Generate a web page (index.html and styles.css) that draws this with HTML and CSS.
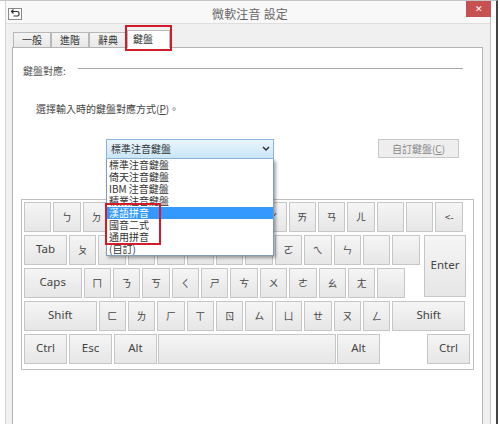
FILE: index.html
```html
<!DOCTYPE html>
<html lang="zh-Hant">
<head>
<meta charset="utf-8">
<title>微軟注音 設定</title>
<link rel="stylesheet" href="styles.css">
</head>
<body>
<div class="page">
  <div class="window">
    <header class="titlebar">
      <svg class="back-icon" width="14" height="12" viewBox="0 0 14 12"><rect x="0.5" y="0.5" width="13" height="11" fill="#fff" stroke="#8a8a8a"/><path d="M4 3.5h5.5a1.5 1.5 0 0 1 1.5 1.5v1.500a1.500 1.500 0 0 1-1.500 1.500h-4M5.500 1.500l-2 2 2 2" fill="none" stroke="#333" stroke-width="1.200"/></svg>
      <span class="title">微軟注音 設定</span>
      <span class="close">✕</span>
    </header>
    <nav class="tabs">
      <span class="tab">一般</span>
      <span class="tab">進階</span>
      <span class="tab">辭典</span>
      <span class="tab tab-active">鍵盤<i class="red-box red-tab"></i></span>
    </nav>
    <main class="pane">
      <div class="group-head"><span>鍵盤對應:</span><span class="rule"></span></div>
      <p class="prompt">選擇輸入時的鍵盤對應方式(<u>P</u>)。</p>
      <div class="combo-row">
        <div class="combo">
          <span>標準注音鍵盤</span>
          <svg width="8" height="6" viewBox="0 0 8 6"><path d="M1 1l3 3 3-3" fill="none" stroke="#333" stroke-width="1.500"/></svg>
          <ul class="list">
            <li>標準注音鍵盤</li>
            <li>倚天注音鍵盤</li>
            <li>IBM 注音鍵盤</li>
            <li>精業注音鍵盤</li>
            <li class="selected">漢語拼音</li>
            <li>國音二式</li>
            <li>通用拼音</li>
            <li>(自訂)</li>
            <i class="red-box red-list"></i>
          </ul>
        </div>
        <button class="custom" disabled>自訂鍵盤(<u>C</u>)</button>
      </div>
      <section class="keyboard">
        <div class="row">
          <span class="key"></span><span class="key">ㄅ</span><span class="key">ㄉ</span><span class="key">ˇ</span><span class="key">ˋ</span><span class="key">ㄓ</span><span class="key">ˊ</span><span class="key">˙</span><span class="key">ㄚ</span><span class="key">ㄞ</span><span class="key">ㄢ</span><span class="key">ㄦ</span><span class="key"></span><span class="key"></span><span class="key">&lt;-</span>
        </div>
        <div class="mid">
          <div class="mid-rows">
            <div class="row">
              <span class="key w-tab">Tab</span><span class="key">ㄆ</span><span class="key">ㄊ</span><span class="key">ㄍ</span><span class="key">ㄐ</span><span class="key">ㄔ</span><span class="key">ㄗ</span><span class="key">ㄧ</span><span class="key">ㄛ</span><span class="key">ㄟ</span><span class="key">ㄣ</span><span class="key"></span><span class="key"></span>
            </div>
            <div class="row">
              <span class="key w-caps">Caps</span><span class="key">ㄇ</span><span class="key">ㄋ</span><span class="key">ㄎ</span><span class="key">ㄑ</span><span class="key">ㄕ</span><span class="key">ㄘ</span><span class="key">ㄨ</span><span class="key">ㄜ</span><span class="key">ㄠ</span><span class="key">ㄤ</span><span class="key"></span>
            </div>
          </div>
          <span class="key w-enter">Enter</span>
        </div>
        <div class="row">
          <span class="key w-shift">Shift</span><span class="key">ㄈ</span><span class="key">ㄌ</span><span class="key">ㄏ</span><span class="key">ㄒ</span><span class="key">ㄖ</span><span class="key">ㄙ</span><span class="key">ㄩ</span><span class="key">ㄝ</span><span class="key">ㄡ</span><span class="key">ㄥ</span><span class="key w-shift">Shift</span>
        </div>
        <div class="row">
          <span class="key w-tab">Ctrl</span><span class="key w-tab">Esc</span><span class="key w-tab">Alt</span><span class="key w-space"></span><span class="key w-tab">Alt</span><span class="key w-tab ctrl-right">Ctrl</span>
        </div>
      </section>
    </main>
  </div>
</div>
</body>
</html>
```
FILE: styles.css
```css
* { box-sizing: border-box; }
html, body { margin: 0; height: 100%; overflow: hidden; background: #fff; }
body { font-family: "Noto Sans CJK TC", "Noto Sans", sans-serif; font-size: 10px; color: #444; }

.page {
  width: 498px;
  height: 424px;
  padding-left: 5px;
  padding-right: 6px;
  border-right: 2px solid #444;
  border-top: 1px solid #c4c4c4;
}
.window {
  width: 486px;
  height: 423px;
  background: #f0f0f0;
  border-left: 1px solid #d4d4d4;
  border-right: 1px solid #c8c8c8;
  display: flex;
  flex-direction: column;
}

.titlebar {
  height: 23px;
  flex: none;
  background: #f8f8f8;
  border-bottom: 1px solid #dedede;
  position: relative;
  display: flex;
  justify-content: center;
  align-items: center;
  padding-top: 2px;
}
.back-icon { position: absolute; left: 2px; top: 7px; }
.title { font-size: 12px; letter-spacing: 0.2px; color: #666; margin-left: 4px; }
.close {
  position: absolute;
  right: -1px;
  top: 0;
  width: 25px;
  height: 16px;
  background: #c75050;
  color: #fff;
  font-size: 9px;
  line-height: 16px;
  text-align: center;
}

.tabs {
  height: 23px;
  flex: none;
  display: flex;
  align-items: flex-end;
  padding-left: 7px;
  position: relative;
  z-index: 1;
}
.tab {
  width: 38px;
  height: 15px;
  background: linear-gradient(#f4f4f4, #e8e8e8);
  border: 1px solid #b8b8b8;
  border-bottom: 0;
  text-align: center;
  font-size: 10px;
  line-height: 14px;
  color: #333;
}
.tab-active {
  position: relative;
  width: 43px;
  height: 18px;
  margin-bottom: -1px;
  padding-right: 11px;
  background: #fff;
  line-height: 15px;
}
.red-box { position: absolute; border: 2px solid #d01c2b; pointer-events: none; }
.red-tab { left: -3px; top: -6px; width: 47px; height: 26px; }

.pane {
  flex: 1;
  margin: 0 7px 0 6px;
  background: #fff;
  border: 1px solid #b4b4b4;
  border-bottom: 0;
  padding: 15px 7px 0 8px;
}
.group-head { display: flex; align-items: center; height: 14px; color: #555; padding-left: 2px; }
.rule { width: 385px; height: 1px; margin: -3px 0 0 12px; background: #a8a8a8; }
.prompt { margin: 25px 0 0 15px; height: 14px; line-height: 14px; color: #444; }

.combo-row { display: flex; margin-top: 23px; padding-left: 85px; }
.combo {
  position: relative;
  z-index: 2;
  width: 168px;
  height: 20px;
  flex: none;
  border: 1px solid #8db5d8;
  background: linear-gradient(#eaf6fd, #c9e5f8);
  display: flex;
  align-items: center;
  justify-content: space-between;
  padding: 0 3px 0 4px;
  color: #333;
  line-height: 1;
}
.list {
  position: absolute;
  left: -1px;
  top: 19px;
  width: 168px;
  margin: 0;
  padding: 0;
  list-style: none;
  background: #fff;
  border: 1px solid #7f9db9;
  border-top: 0;
  box-shadow: 2px 2px 3px rgba(0, 0, 0, 0.35);
  font-size: 10px;
}
.list li { height: 12px; line-height: 12px; padding-left: 2px; color: #333; }
.list .selected { background: #3399ff; color: #fff; }
.red-list { left: -2px; top: 44px; width: 56px; height: 42px; }

.custom {
  margin: 0 0 0 104px;
  width: 81px;
  height: 19px;
  padding: 0;
  border: 1px solid #c8c8c8;
  background: #eeeeee;
  color: #8a8a8a;
  font: inherit;
}

.keyboard {
  margin: 40px 0 0 0;
  width: 453px;
  height: 171px;
  border: 1px solid #c0c0c0;
  padding: 2px 2px 0;
  display: flex;
  flex-direction: column;
  gap: 3px;
}
.row { display: flex; gap: 2px; height: 30px; }
.key {
  flex: none;
  width: 27.4px;
  height: 30px;
  background: linear-gradient(#f5f5f5, #e6e6e6);
  border: 1px solid #c6c6c6;
  text-align: center;
  font-family: "Noto Sans CJK TC", "Noto Sans", sans-serif;
  font-size: 10px;
  line-height: 27px;
  color: #444;
}
.w-tab, .w-caps, .w-shift, .w-enter {
  font-family: "Noto Sans", sans-serif;
  font-size: 11.500px;
  line-height: 26px;
}
.mid { display: flex; height: 63px; }
.mid-rows { width: 400px; display: flex; flex-direction: column; gap: 3px; }
.w-tab { width: 43px; }
.w-caps { width: 57.500px; }
.w-shift { width: 72.500px; }
.w-space { width: 178px; margin: 0 -1px; }
.w-enter { width: 42px; height: 62px; line-height: 58px; }
.ctrl-right { margin-left: 45px; }
```
